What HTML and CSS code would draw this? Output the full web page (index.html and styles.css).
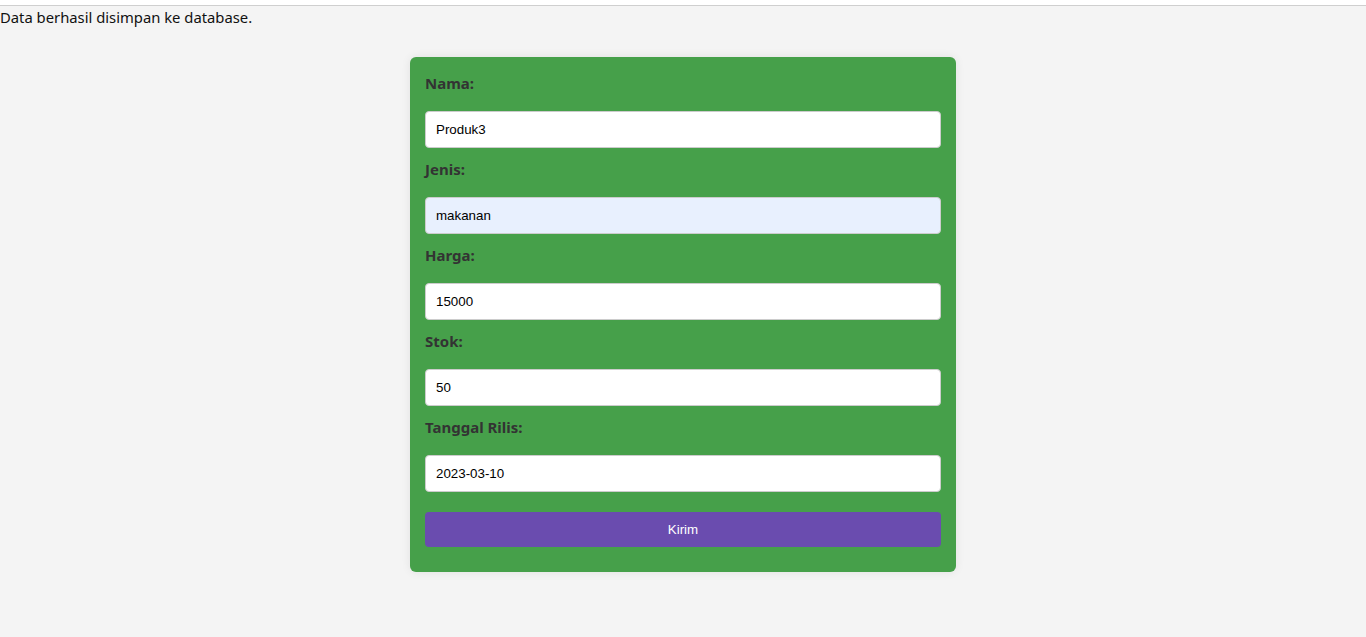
FILE: index.html
```html
<!DOCTYPE html>
<html lang="id">
<head>
<meta charset="utf-8">
<title>Form Produk</title>
<link rel="stylesheet" href="styles.css">
</head>
<body>
<div class="topbar"></div>
<p class="message">Data berhasil disimpan ke database.</p>
<form class="card">
  <label class="field-label" for="nama">Nama:</label>
  <input class="field-input" id="nama" type="text" value="Produk3">
  <label class="field-label" for="jenis">Jenis:</label>
  <input class="field-input autofill" id="jenis" type="text" value="makanan">
  <label class="field-label" for="harga">Harga:</label>
  <input class="field-input" id="harga" type="text" value="15000">
  <label class="field-label" for="stok">Stok:</label>
  <input class="field-input" id="stok" type="text" value="50">
  <label class="field-label" for="tanggal">Tanggal Rilis:</label>
  <input class="field-input" id="tanggal" type="text" value="2023-03-10">
  <button class="submit" type="button">Kirim</button>
</form>
</body>
</html>
```
FILE: styles.css
```css
* { box-sizing: border-box; }
html, body {
  margin: 0;
  padding: 0;
  background: #f4f4f4;
  height: 100%;
}
body {
  font-family: "Noto Sans", "Open Sans", sans-serif;
  color: #111;
}
.topbar {
  height: 6px;
  background: #fff;
  border-bottom: 1px solid #cfcfcf;
}
.message {
  margin: 0;
  font-size: 14.8px;
  line-height: 22px;
  height: 22px;
}
.card {
  width: 546px;
  margin: 29px auto 0;
  padding: 15px 15px 25px;
  background: #46a04a;
  border-radius: 6px;
  box-shadow: 0 0 10px rgba(0, 0, 0, 0.08);
  display: flex;
  flex-direction: column;
}
.field-label {
  display: block;
  font-weight: bold;
  font-size: 15px;
  line-height: 22px;
  color: #333;
  margin-bottom: 17px;
}
.field-input {
  height: 37px;
  width: 100%;
  padding: 0 10px;
  border: 1px solid #ccc;
  border-radius: 4px;
  background: #fff;
  font-family: "Liberation Sans", Arial, sans-serif;
  font-size: 13.33px;
  color: #000;
  margin-bottom: 10px;
  outline: none;
}
.field-input.autofill { background: #e8f0fe; }
.field-input:last-of-type { margin-bottom: 20px; }
.submit {
  height: 35px;
  width: 100%;
  border: none;
  border-radius: 4px;
  background: #6a4caf;
  color: #fff;
  font-family: "Liberation Sans", Arial, sans-serif;
  font-size: 13.33px;
  cursor: pointer;
}
```
